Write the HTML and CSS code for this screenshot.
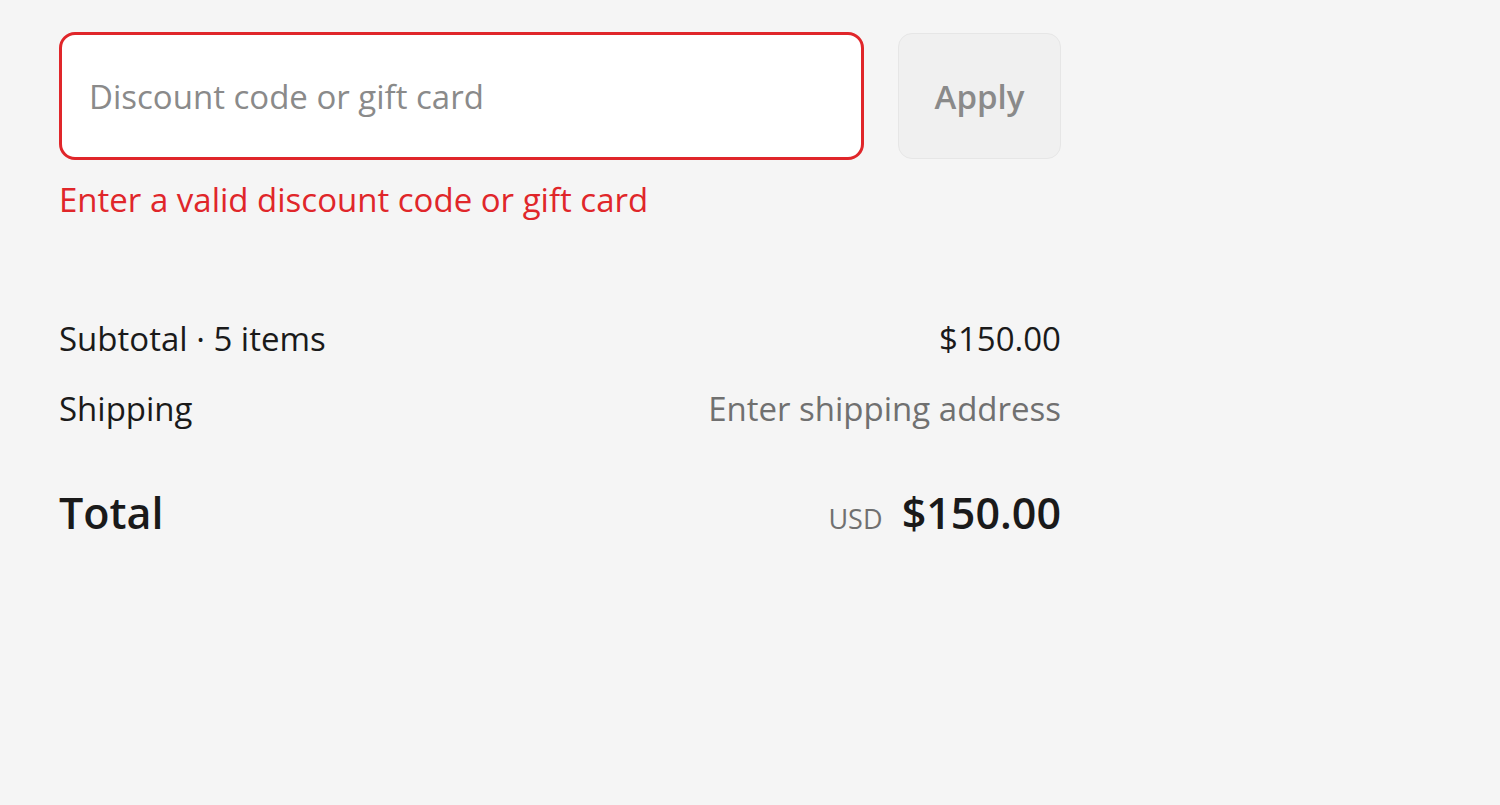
FILE: index.html
```html
<!DOCTYPE html>
<html lang="en">
<head>
    <meta charset="UTF-8">
    <meta name="viewport" content="width=device-width, initial-scale=1.0">
    <title>Order summary</title>
    <link rel="stylesheet" href="styles.css">
</head>
<body>
    <div class="summary">
        <form class="discount" onsubmit="return false;">
            <div class="discount-row">
                <input class="discount-input" type="text" placeholder="Discount code or gift card">
                <button class="apply" type="submit">Apply</button>
            </div>
            <p class="error">Enter a valid discount code or gift card</p>
        </form>

        <div class="lines">
            <div class="line">
                <span>Subtotal · 5 items</span>
                <span>$150.00</span>
            </div>
            <div class="line">
                <span>Shipping</span>
                <span class="muted">Enter shipping address</span>
            </div>
            <div class="line total">
                <span>Total</span>
                <span class="amount"><small>USD</small> $150.00</span>
            </div>
        </div>
    </div>
</body>
</html>
```

FILE: styles.css
```css
body {
    font-family: "Open Sans", "Noto Sans", sans-serif;
    background-color: #f5f5f5;
    color: #1a1a1a;
    margin: 0;
}

.summary {
    width: 1002px;
    padding: 32px 59px;
}

.discount-row {
    display: flex;
    gap: 34px;
}

.discount-input {
    flex: 1;
    height: 128px;
    box-sizing: border-box;
    padding: 0 27px;
    border: 3px solid #e0262a;
    border-radius: 16px;
    background-color: white;
    font-family: inherit;
    font-size: 33px;
    outline: none;
}

.discount-input::placeholder {
    color: #8a8a8a;
}

.apply {
    width: 163px;
    height: 126px;
    margin-top: 1px;
    background-color: #f0f0f0;
    border: 1px solid #e6e6e6;
    border-radius: 14px;
    color: #8a8a8a;
    font-family: inherit;
    font-size: 33px;
    font-weight: 600;
    cursor: pointer;
}

.error {
    margin: 20px 0 0;
    color: #e0262a;
    font-size: 33px;
    line-height: 40px;
}

.lines {
    margin-top: 84px;
}

.line {
    display: flex;
    justify-content: space-between;
    align-items: baseline;
    font-size: 33px;
    line-height: 70px;
}

.muted {
    color: #707070;
}

.total {
    margin-top: 34px;
    font-size: 43px;
    font-weight: 600;
}

.total small {
    font-size: 27px;
    font-weight: 400;
    color: #707070;
    margin-right: 8px;
}
```
